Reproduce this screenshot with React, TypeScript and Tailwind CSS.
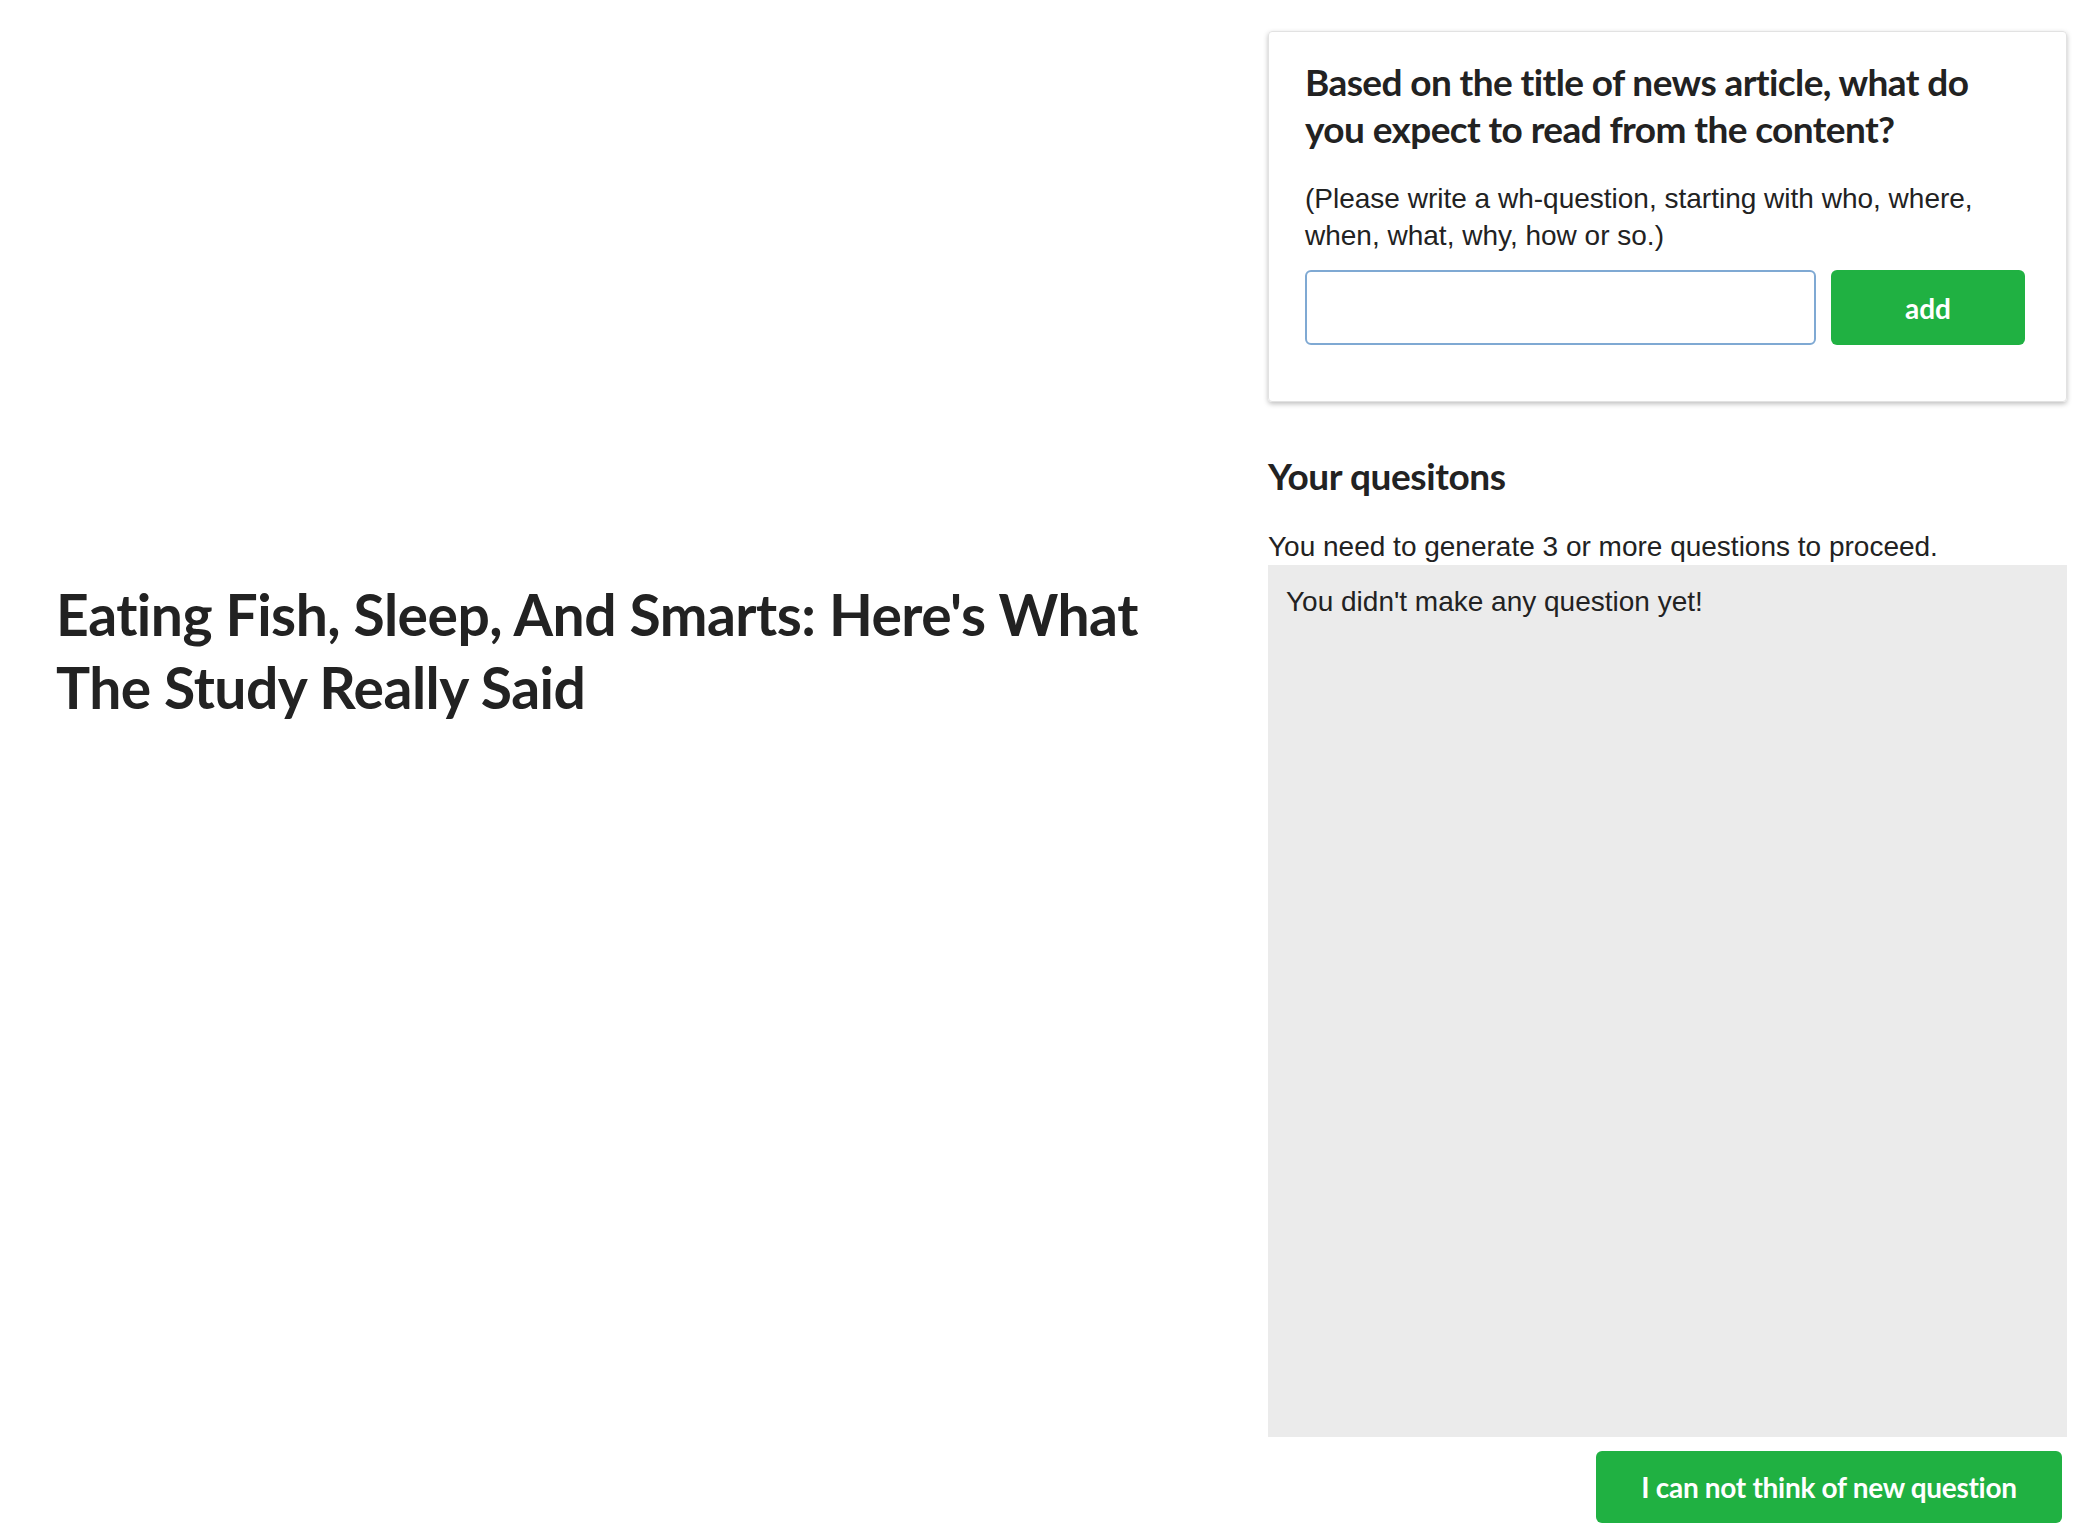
import { useState } from "react";

export default function App() {
  const [question, setQuestion] = useState("");
  const questions: string[] = [];

  return (
    <div className="flex w-[2098px] h-[1536px] bg-white text-[#222222]">
      {/* title of the article */}
      <div className="flex-1 pl-[56px] pr-[40px] pt-[578px]">
        <h1 className="font-['Lato',sans-serif] font-bold text-[57px] leading-[73px] tracking-[-0.5px]">
          Eating Fish, Sleep, And Smarts: Here's What The Study Really Said
        </h1>
      </div>

      <div className="w-[799px] mr-[31px] pt-[31px] flex flex-col">
        <div className="rounded-[4px] border border-[#e2e2e2] shadow-[0_2px_5px_rgba(0,0,0,0.25)] pl-[36px] pr-[41px] pt-[26px] pb-[56px]">
          <h2 className="font-['Lato',sans-serif] font-bold text-[37px] leading-[47px] tracking-[-0.6px]">
            Based on the title of news article, what do you expect to read from the content?
          </h2>
          <p className="mt-[28px] font-['Liberation_Sans',Arial,sans-serif] text-[28px] leading-[37px]">
            (Please write a wh-question, starting with who, where, when, what, why, how or so.)
          </p>
          <div className="mt-[16px] flex gap-[15px]">
            <input
              value={question}
              onChange={(e) => setQuestion(e.target.value)}
              className="flex-1 h-[75px] rounded-[6px] border-2 border-[#7fa9d3] px-4 text-[27px] outline-none"
            />
            <button className="w-[194px] h-[75px] rounded-[6px] bg-[#20b142] text-white font-['Lato',sans-serif] font-bold text-[28px]">
              add
            </button>
          </div>
        </div>

        <h3 className="mt-[50px] font-['Lato',sans-serif] font-bold text-[37px] leading-[47px] tracking-[-0.4px]">
          Your quesitons
        </h3>
        <p className="mt-[29px] font-['Liberation_Sans',Arial,sans-serif] text-[28px] leading-[37px]">
          You need to generate 3 or more questions to proceed.
        </p>
        <div className="h-[872px] bg-[#ebebeb] pl-[18px] pt-[18px] font-['Liberation_Sans',Arial,sans-serif] text-[28px] leading-[37px]">
          {questions.length === 0 ? "You didn't make any question yet!" : null}
        </div>
        <div className="flex justify-end mt-[14px] mr-[5px]">
          <button className="w-[466px] h-[72px] rounded-[6px] bg-[#20b142] text-white font-['Lato',sans-serif] font-bold text-[28px] tracking-[-0.3px]">
            I can not think of new question
          </button>
        </div>
      </div>
    </div>
  );
}
